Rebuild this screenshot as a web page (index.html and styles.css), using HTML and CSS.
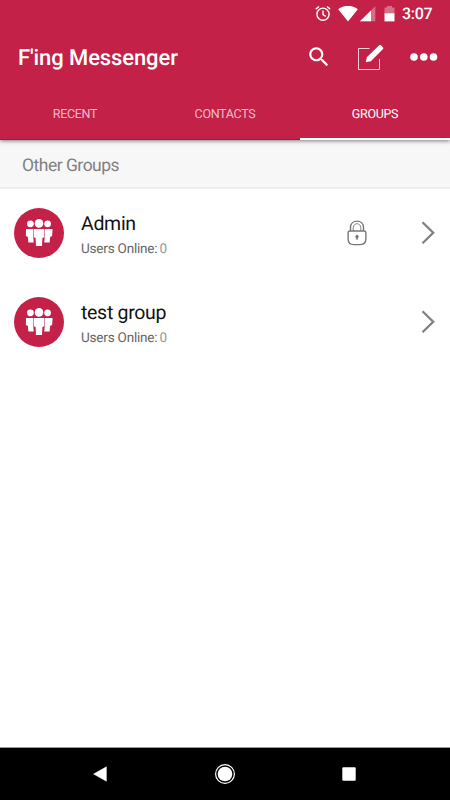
FILE: index.html
```html
<!DOCTYPE html>
<html lang="en">
<head>
  <meta charset="UTF-8" />
  <meta name="viewport" content="width=device-width, initial-scale=1.0"/>
  <title>F'ing Messenger</title>
  <link rel="stylesheet" href="styles.css">
</head>
<body>
  <svg class="defs" width="0" height="0">
    <symbol id="people" viewBox="0 0 50 50">
      <circle cx="25" cy="15.4" r="4.3"/>
      <circle cx="16.4" cy="15.8" r="3.4"/>
      <circle cx="33.6" cy="15.8" r="3.4"/>
      <path d="M12 20.9H19.3V29L19.7 34.5H14.4L13.9 29L11.9 28.1Z"/>
      <path d="M38.6 20.9H30.7V29L30.3 34.5H35.6L36.1 29L38.1 28.1Z"/>
      <path d="M19.8 20.9H30.2V29.2L28.4 29.9L28 38.1H22L21.6 29.9L19.8 29.2Z"/>
    </symbol>
    <symbol id="chevron" viewBox="0 0 14 24">
      <path d="M1.5 1.2L12.2 11.7L1.5 22.2" fill="none" stroke="#818181" stroke-width="2.3"/>
    </symbol>
  </svg>

  <div class="app">
    <header class="header">
      <div class="status">
        <svg class="alarm" width="16" height="16" viewBox="0 0 16 16" fill="none" stroke="#fff" stroke-width="1.4">
          <circle cx="8" cy="8.2" r="6.1"/>
          <path d="M8 4.5V8.5L10.8 10.3M.8 3.1L4 .5M15.2 3.1L12 .5"/>
        </svg>
        <svg class="wifi" width="20" height="16" viewBox="0 0 20 16" fill="#fff">
          <path d="M.2 3.3C6-1.4 14-1.4 19.8 3.3L10 15.4Z"/>
        </svg>
        <svg class="signal" width="16" height="16" viewBox="0 0 16 16" fill="#fff">
          <path d="M0 15.3L15.3 .3V15.3Z" opacity=".35"/>
          <path d="M0 15.3L11 4.5V15.3Z"/>
        </svg>
        <svg class="battery" width="11" height="16" viewBox="0 0 11 16" fill="#fff">
          <path d="M.5 1.6H3V0H8V1.6H10.5V7.3H.5Z" opacity=".35"/>
          <path d="M.5 7.2H10.5V15.4H.5Z"/>
        </svg>
        <span class="time">3:07</span>
      </div>

      <div class="toolbar">
        <h1>F'ing Messenger</h1>
        <svg class="search" width="26" height="26" viewBox="0 0 24 24" fill="#fff">
          <path d="M15.5 14h-.79l-.28-.27C15.41 12.59 16 11.11 16 9.5 16 5.91 13.09 3 9.5 3S3 5.91 3 9.5 5.91 16 9.5 16c1.61 0 3.09-.59 4.23-1.57l.27.28v.79l5 4.99L20.49 19l-4.99-5zm-6 0C7.01 14 5 11.99 5 9.5S7.01 5 9.5 5 14 7.01 14 9.5 11.99 14 9.5 14z"/>
        </svg>
        <svg class="compose" width="27" height="27" viewBox="0 0 27 27">
          <path d="M12.5 4.5H1.5V25.5H22.5V15" fill="none" stroke="#fff" stroke-opacity=".8" stroke-width="1"/>
          <path d="M8.8 18.3L9.8 13.2L22.2 1.3Q23.1.5 24 1.3L26.1 3.4Q26.8 4.2 26 5L13.8 17.2Z" fill="#fff"/>
        </svg>
        <svg class="more" width="28" height="8" viewBox="0 0 28 8" fill="#fff">
          <circle cx="4" cy="4" r="3.8"/>
          <circle cx="13.8" cy="4" r="3.8"/>
          <circle cx="23.5" cy="4" r="3.8"/>
        </svg>
      </div>

      <nav class="tabs">
        <div class="tab">RECENT</div>
        <div class="tab">CONTACTS</div>
        <div class="tab active">GROUPS</div>
      </nav>
    </header>

    <main class="content">
      <h2>Other Groups</h2>
      <div class="group">
        <div class="avatar"><svg width="50" height="50"><use href="#people"/></svg></div>
        <div class="info">
          <div class="name">Admin</div>
          <div class="online">Users Online: <span>0</span></div>
        </div>
        <svg class="lock" width="20" height="26" viewBox="0 0 20 26" fill="none" stroke="#777" stroke-width="1.4">
          <path d="M3.5 11V7.4C3.5-1 16.5-1 16.5 7.4V11"/>
          <path d="M6.2 11V7.8C6.2 2.4 13.8 2.4 13.8 7.8V11" stroke-width=".9"/>
          <path d="M3 11H17Q18.9 11 18.9 12.9V18.8Q18.9 24.6 13 24.6H7Q1.1 24.6 1.1 18.8V12.9Q1.1 11 3 11Z"/>
          <path d="M10 15.1A1.6 1.6 0 0 1 10.8 18L10.5 19.6H9.5L9.2 18A1.6 1.6 0 0 1 10 15.1Z" fill="#777" stroke-width=".4"/>
        </svg>
        <svg class="arrow" width="14" height="24"><use href="#chevron"/></svg>
      </div>
      <div class="group">
        <div class="avatar"><svg width="50" height="50"><use href="#people"/></svg></div>
        <div class="info">
          <div class="name">test group</div>
          <div class="online">Users Online: <span>0</span></div>
        </div>
        <svg class="arrow" width="14" height="24"><use href="#chevron"/></svg>
      </div>
    </main>

    <footer class="navbar">
      <svg width="14" height="16" viewBox="0 0 14 16" fill="#fff"><path d="M.6 8L13.4 .8V15.2Z" stroke="#fff" stroke-width=".5" stroke-linejoin="round"/></svg>
      <svg width="22" height="22" viewBox="0 0 22 22" fill="#fff">
        <circle cx="11" cy="11" r="9.4" fill="none" stroke="#fff" stroke-width="1.2"/>
        <circle cx="11" cy="11" r="7.3"/>
      </svg>
      <svg width="14" height="14" viewBox="0 0 14 14" fill="#fff"><rect x=".3" y=".2" width="13.4" height="13.6" rx="1"/></svg>
    </footer>
  </div>
</body>
</html>
```

FILE: styles.css
```css
body {
  margin: 0;
  font-family: Roboto, sans-serif;
  text-rendering: geometricPrecision;
  background: #fff;
}
.defs {
  display: block;
}
.app {
  display: flex;
  flex-direction: column;
  height: 800px;
  overflow: hidden;
}
.header {
  position: relative;
  height: 140px;
  box-sizing: border-box;
  background: #c42148;
  border-bottom: 1px solid #b80f2b;
  box-shadow: 0 1px 4px rgba(0, 0, 0, 0.5);
  color: #fff;
}
.status {
  display: flex;
  align-items: center;
  justify-content: flex-end;
  height: 27px;
  padding-right: 17px;
}
.wifi {
  margin-left: 7px;
}
.signal {
  margin-left: 2px;
}
.battery {
  margin-left: 8px;
}
.time {
  width: 31px;
  margin-left: 7px;
  font-size: 16px;
  font-weight: 500;
  letter-spacing: -0.3px;
}
.toolbar {
  display: flex;
  align-items: center;
  height: 61px;
  padding: 0 12px 0 18px;
}
h1 {
  flex: 1;
  margin: 0;
  padding-top: 2px;
  font-size: 22px;
  font-weight: 500;
  letter-spacing: -0.1px;
}
.search {
  margin-top: -2px;
}
.compose {
  margin-left: 25px;
}
.more {
  margin-top: -1px;
  margin-left: 26px;
}
.tabs {
  display: flex;
  height: 51px;
}
.tab {
  flex: 1;
  box-sizing: border-box;
  height: 51px;
  line-height: 53px;
  font-size: 12.5px;
  letter-spacing: -0.3px;
  text-align: center;
  color: rgba(255, 255, 255, 0.7);
}
.tab.active {
  height: 52px;
  color: #fff;
  border-bottom: 2px solid #fff;
}
.content {
  flex: 1;
}
h2 {
  height: 49px;
  margin: 0 0 -1px;
  padding-left: 22px;
  box-sizing: border-box;
  line-height: 52px;
  font-size: 17.5px;
  letter-spacing: -0.5px;
  font-weight: 400;
  color: #818181;
  background: #f7f7f7;
  border-bottom: 2px solid #eee;
}
.group {
  display: flex;
  align-items: center;
  height: 89px;
  padding: 0 15px 0 14px;
}
.avatar {
  width: 50px;
  height: 50px;
  border-radius: 50%;
  background: #c42148;
  fill: #fff;
}
.info {
  flex: 1;
  margin-left: 17px;
  padding-top: 5px;
}
.name {
  line-height: 24px;
  font-size: 19.5px;
  letter-spacing: -0.3px;
  color: #111;
}
.online {
  margin-top: 4px;
  line-height: 18px;
  font-size: 13.5px;
  letter-spacing: -0.2px;
  color: #666;
}
.online span {
  margin-left: -1px;
  color: #999;
}
.arrow {
  margin-left: 54px;
}
.navbar {
  display: flex;
  align-items: center;
  justify-content: space-between;
  box-sizing: border-box;
  height: 53px;
  padding: 0 94px 0 93px;
  background: #000;
  border-top: 1px solid #999;
}
```
